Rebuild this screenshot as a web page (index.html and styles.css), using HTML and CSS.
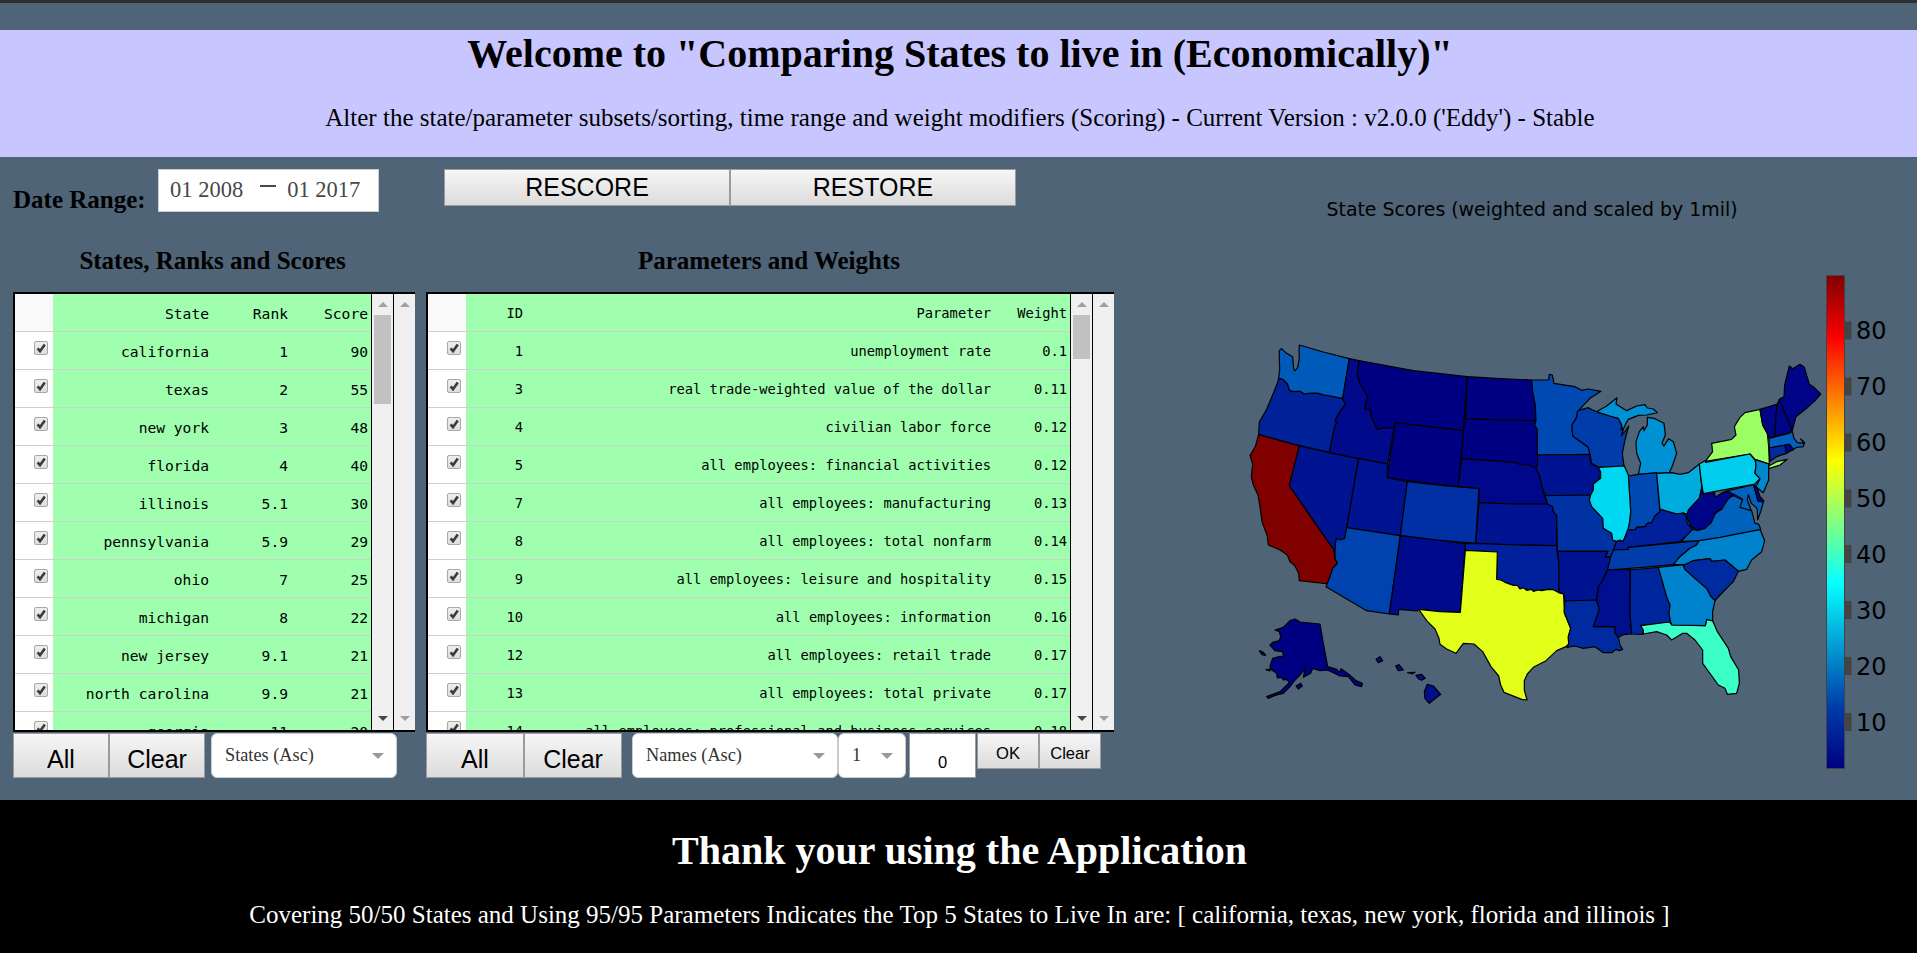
FILE: index.html
```html
<!DOCTYPE html>
<html lang="en">
<head>
<meta charset="utf-8">
<title>Comparing States</title>
<link rel="stylesheet" href="styles.css">
</head>
<body>
<svg class="defs" width="0" height="0"><defs>
<symbol id="check" viewBox="0 0 14 14"><path d="M2.600 6.400L5 9.200L9.800 2.400" fill="none" stroke="#3a3a3a" stroke-width="2.600"/></symbol>
</defs></svg>
<div class="topbar"></div>
<header class="banner">
<h1>Welcome to "Comparing States to live in (Economically)"</h1>
<p>Alter the state/parameter subsets/sorting, time range and weight modifiers (Scoring) - Current Version : v2.0.0 ('Eddy') - Stable</p>
</header>
<main class="main">
<section class="panel states">
<div class="tools"><span class="label">Date Range:</span><div class="dates"><span>01 2008</span><i class="dash"></i><span>01 2017</span></div></div>
<h3>States, Ranks and Scores</h3>
<div class="frame">
<div class="table">
<div class="row head"><span class="c"></span><span>State</span><span>Rank</span><span>Score</span></div>
<div class="row"><span class="c"><svg class="box"><use href="#check" width="14" height="14"/></svg></span><span>california</span><span>1</span><span>90</span></div>
<div class="row"><span class="c"><svg class="box"><use href="#check" width="14" height="14"/></svg></span><span>texas</span><span>2</span><span>55</span></div>
<div class="row"><span class="c"><svg class="box"><use href="#check" width="14" height="14"/></svg></span><span>new york</span><span>3</span><span>48</span></div>
<div class="row"><span class="c"><svg class="box"><use href="#check" width="14" height="14"/></svg></span><span>florida</span><span>4</span><span>40</span></div>
<div class="row"><span class="c"><svg class="box"><use href="#check" width="14" height="14"/></svg></span><span>illinois</span><span>5.1</span><span>30</span></div>
<div class="row"><span class="c"><svg class="box"><use href="#check" width="14" height="14"/></svg></span><span>pennsylvania</span><span>5.9</span><span>29</span></div>
<div class="row"><span class="c"><svg class="box"><use href="#check" width="14" height="14"/></svg></span><span>ohio</span><span>7</span><span>25</span></div>
<div class="row"><span class="c"><svg class="box"><use href="#check" width="14" height="14"/></svg></span><span>michigan</span><span>8</span><span>22</span></div>
<div class="row"><span class="c"><svg class="box"><use href="#check" width="14" height="14"/></svg></span><span>new jersey</span><span>9.1</span><span>21</span></div>
<div class="row"><span class="c"><svg class="box"><use href="#check" width="14" height="14"/></svg></span><span>north carolina</span><span>9.9</span><span>21</span></div>
<div class="row"><span class="c"><svg class="box"><use href="#check" width="14" height="14"/></svg></span><span>georgia</span><span>11</span><span>20</span></div>
</div>
<div class="scroll"><i class="up"></i><i class="thumb"></i><i class="down dark"></i></div>
<div class="scroll outer"><i class="up"></i><i class="down"></i></div>
</div>
<div class="actions"><button class="btn">All</button><button class="btn">Clear</button><div class="select sort">States (Asc)<i class="caret"></i></div></div>
</section>
<section class="panel params">
<div class="tools"><button class="btn wide">RESCORE</button><button class="btn wide">RESTORE</button></div>
<h3>Parameters and Weights</h3>
<div class="frame">
<div class="table">
<div class="row head"><span class="c"></span><span>ID</span><span>Parameter</span><span>Weight</span></div>
<div class="row"><span class="c"><svg class="box"><use href="#check" width="14" height="14"/></svg></span><span>1</span><span>unemployment rate</span><span>0.1</span></div>
<div class="row"><span class="c"><svg class="box"><use href="#check" width="14" height="14"/></svg></span><span>3</span><span>real trade-weighted value of the dollar</span><span>0.11</span></div>
<div class="row"><span class="c"><svg class="box"><use href="#check" width="14" height="14"/></svg></span><span>4</span><span>civilian labor force</span><span>0.12</span></div>
<div class="row"><span class="c"><svg class="box"><use href="#check" width="14" height="14"/></svg></span><span>5</span><span>all employees: financial activities</span><span>0.12</span></div>
<div class="row"><span class="c"><svg class="box"><use href="#check" width="14" height="14"/></svg></span><span>7</span><span>all employees: manufacturing</span><span>0.13</span></div>
<div class="row"><span class="c"><svg class="box"><use href="#check" width="14" height="14"/></svg></span><span>8</span><span>all employees: total nonfarm</span><span>0.14</span></div>
<div class="row"><span class="c"><svg class="box"><use href="#check" width="14" height="14"/></svg></span><span>9</span><span>all employees: leisure and hospitality</span><span>0.15</span></div>
<div class="row"><span class="c"><svg class="box"><use href="#check" width="14" height="14"/></svg></span><span>10</span><span>all employees: information</span><span>0.16</span></div>
<div class="row"><span class="c"><svg class="box"><use href="#check" width="14" height="14"/></svg></span><span>12</span><span>all employees: retail trade</span><span>0.17</span></div>
<div class="row"><span class="c"><svg class="box"><use href="#check" width="14" height="14"/></svg></span><span>13</span><span>all employees: total private</span><span>0.17</span></div>
<div class="row"><span class="c"><svg class="box"><use href="#check" width="14" height="14"/></svg></span><span>14</span><span>all employees: professional and business services</span><span>0.18</span></div>
</div>
<div class="scroll"><i class="up"></i><i class="thumb"></i><i class="down dark"></i></div>
<div class="scroll outer"><i class="up"></i><i class="down"></i></div>
</div>
<div class="actions"><button class="btn">All</button><button class="btn">Clear</button><div class="select names">Names (Asc)<i class="caret"></i></div><div class="select num">1<i class="caret"></i></div><div class="value">0</div><button class="btn small">OK</button><button class="btn small">Clear</button></div>
</section>
<svg class="map" viewBox="1200 157 717 643">
<defs><linearGradient id="jet" x1="0" y1="1" x2="0" y2="0">
<stop offset="0" stop-color="rgb(0,0,131)"/><stop offset=".125" stop-color="rgb(0,60,170)"/><stop offset=".375" stop-color="rgb(5,255,255)"/><stop offset=".625" stop-color="rgb(255,255,0)"/><stop offset=".875" stop-color="rgb(250,0,0)"/><stop offset="1" stop-color="rgb(128,0,0)"/>
</linearGradient></defs>
<text class="map-title" x="1326.5" y="216" textLength="411" lengthAdjust="spacingAndGlyphs">State Scores (weighted and scaled by 1mil)</text>
<g class="land" transform="translate(1240 330) scale(.33333)">
<path fill="rgb(0,90,185)" d="M178 45L250 66L328 86L308 206L270 198L250 195L235 190L210 190L192 192L180 184L160 185L148 182L142 162L128 148L116 145L119 118L118 88L118 62L124 56L140 70L158 80L160 105L162 120L166 122L173 112L178 85L177 60Z"/>
<path fill="rgb(0,33,152)" d="M116 145L128 148L142 162L148 182L160 185L180 184L192 192L210 190L235 190L250 195L270 198L308 206L316 222L300 245L286 270L290 280L284 290L268 368L160 342L56 314L58 276L80 238L100 190L112 160Z"/>
<path fill="rgb(128,0,0)" d="M56 314L178 348L148 467L215 565L282 660L285 685L292 700L278 715L268 745L267 762L178 752L176 730L165 708L150 695L142 675L120 660L85 645L82 618L66 575L60 530L54 495L40 465L34 440L38 402L30 377L46 350Z"/>
<path fill="rgb(0,20,146)" d="M178 348L268 368L356 386L320 593L314 625L300 630L290 625L286 640L285 662L282 660L148 467Z"/>
<path fill="rgb(0,10,138)" d="M328 86L357 92L352 135L362 165L384 200L378 218L374 238L390 236L396 265L412 298L434 292L455 294L463 290L443 402L356 386L268 368L284 290L290 280L286 270L300 245L316 222L308 206Z"/>
<path fill="rgb(0,0,131)" d="M357 92L520 122L682 140L670 302L466 278L463 290L455 294L434 292L412 298L396 265L390 236L374 238L378 218L384 200L362 165L352 135Z"/>
<path fill="rgb(0,0,131)" d="M466 278L670 302L655 470L550 458L441 443Z"/>
<path fill="rgb(0,20,146)" d="M356 386L443 402L441 443L502 455L481 617L320 593Z"/>
<path fill="rgb(0,48,163)" d="M502 455L610 467L717 475L707 640L590 630L481 617Z"/>
<path fill="rgb(0,67,174)" d="M320 593L481 617L448 852L380 842L258 770L268 745L278 715L292 700L285 685L285 662L286 640L290 625L300 630L314 625Z"/>
<path fill="rgb(0,10,138)" d="M481 617L590 630L676 641L661 847L600 845L536 838L532 843L476 838L475 855L448 852Z"/>
<path fill="rgb(0,0,131)" d="M682 140L780 146L875 150L878 185L886 225L888 272L780 270L676 266Z"/>
<path fill="rgb(0,0,131)" d="M676 266L780 270L888 272L884 285L892 298L893 400L888 415L868 405L840 403L826 397L665 386L670 302Z"/>
<path fill="rgb(0,8,137)" d="M665 386L826 397L840 403L868 405L888 415L898 435L905 465L912 495L923 522L820 522L717 518L717 475L655 470Z"/>
<path fill="rgb(0,20,146)" d="M717 518L820 522L923 522L938 530L940 545L950 557L950 647L830 645L707 640Z"/>
<path fill="rgb(0,33,155)" d="M676 641L707 640L830 645L950 647L957 700L957 788L930 778L905 780L875 783L860 778L838 776L820 766L795 757L770 748L772 666L676 661Z"/>
<path fill="rgb(225,255,25)" d="M676 661L772 666L770 748L782 750L795 757L820 766L832 766L840 777L850 773L860 781L875 778L880 784L895 780L905 782L925 778L940 779L957 788L971 792L973 848L992 895L985 920L986 942L978 950L950 962L918 992L880 1012L862 1032L853 1052L853 1080L861 1110L845 1108L792 1087L782 1065L776 1038L753 1010L728 965L702 942L670 940L648 970L620 957L600 943L597 925L585 897L560 872L536 838L600 845L661 847Z"/>
<path fill="rgb(0,72,178)" d="M875 150L926 150L928 133L937 135L942 160L980 166L1005 170L1025 181L1045 177L1083 184L1050 205L1016 241L1010 262L996 285L998 318L1015 330L1045 352L1050 373L892 375L892 298L884 285L888 272L886 225L878 185Z"/>
<path fill="rgb(0,60,170)" d="M1016 241L1045 233L1058 240L1075 247L1110 258L1135 265L1145 285L1143 300L1150 298L1144 318L1158 300L1166 288L1155 330L1147 370L1152 408L1075 412L1055 400L1050 373L1045 352L1015 330L998 318L996 285L1010 262L1012 245Z"/>
<path fill="rgb(0,145,212)" d="M1072 244L1100 228L1131 203L1128 222L1160 242L1190 228L1215 224L1222 234L1240 237L1252 248L1220 255L1195 256L1165 268L1158 280L1148 302L1145 285L1135 265L1110 258L1075 247ZM1222 262L1245 266L1272 280L1276 315L1266 340L1272 348L1286 326L1300 335L1310 370L1298 405L1288 428L1252 430L1195 433L1202 400L1190 370L1188 335L1198 305L1210 290L1212 302L1222 285Z"/>
<path fill="rgb(0,20,145)" d="M892 375L1050 373L1050 390L1055 403L1075 412L1082 432L1075 450L1060 462L1060 480L1050 497L915 497L905 465L898 435L888 415L893 400Z"/>
<path fill="rgb(0,50,163)" d="M915 497L1050 495L1048 510L1055 530L1088 565L1090 595L1115 610L1118 630L1130 634L1122 660L1112 680L1095 682L1104 664L952 664L950 557L940 545L938 530L923 522Z"/>
<path fill="rgb(0,72,178)" d="M1165 438L1195 433L1250 428L1260 545L1245 558L1235 578L1222 580L1215 590L1190 592L1185 600L1163 600L1168 580L1172 545Z"/>
<path fill="rgb(0,215,240)" d="M1075 412L1153 408L1165 435L1172 545L1168 580L1162 605L1150 634L1140 630L1130 634L1118 630L1115 610L1090 595L1088 565L1055 530L1048 510L1052 495L1060 480L1060 462L1082 445L1082 425Z"/>
<path fill="rgb(0,172,222)" d="M1250 430L1295 428L1320 433L1345 428L1378 402L1382 440L1386 470L1378 505L1355 530L1345 553L1330 549L1310 552L1280 545L1260 538Z"/>
<path fill="rgb(0,33,155)" d="M1163 600L1185 600L1190 592L1215 590L1222 580L1235 578L1245 558L1260 545L1262 538L1285 545L1310 552L1330 549L1338 558L1342 580L1358 598L1320 635L1165 652L1165 658L1120 660L1130 634L1150 634Z"/>
<path fill="rgb(0,60,170)" d="M1120 660L1165 658L1165 652L1377 632L1370 645L1350 655L1320 680L1300 704L1200 713L1102 720L1112 680Z"/>
<path fill="rgb(0,20,145)" d="M952 664L1104 664L1095 682L1112 680L1102 720L1090 748L1075 770L1070 810L975 814L971 792L957 788L957 700Z"/>
<path fill="rgb(0,43,160)" d="M975 813L1070 810L1078 838L1060 890L1125 890L1125 908L1136 925L1140 945L1148 958L1138 962L1128 958L1115 968L1090 968L1065 950L1030 955L1005 948L980 952L986 942L985 920L992 895L973 848Z"/>
<path fill="rgb(0,15,142)" d="M1102 720L1171 718L1170 850L1175 912L1150 914L1136 922L1125 908L1125 890L1060 890L1078 838L1070 810L1075 770L1090 748Z"/>
<path fill="rgb(0,38,157)" d="M1171 720L1255 712L1280 800L1290 825L1287 850L1292 877L1202 887L1210 900L1208 913L1175 912L1170 850Z"/>
<path fill="rgb(60,255,200)" d="M1202 887L1288 876L1296 885L1396 887L1400 868L1418 872L1432 905L1465 955L1472 980L1496 1020L1498 1060L1490 1090L1462 1093L1455 1075L1435 1065L1388 1000L1388 960L1365 930L1340 910L1328 910L1295 930L1280 915L1250 905L1210 912L1210 900Z"/>
<path fill="rgb(0,130,205)" d="M1255 712L1330 704L1335 718L1365 745L1400 775L1412 798L1425 812L1418 845L1418 873L1400 868L1396 887L1296 885L1292 877L1287 850L1290 825L1280 800Z"/>
<path fill="rgb(0,130,205)" d="M1377 632L1560 598L1574 632L1565 665L1535 690L1520 718L1495 724L1455 690L1415 694L1410 686L1360 692L1340 704L1300 704L1320 680L1350 655L1370 645Z"/>
<path fill="rgb(0,43,160)" d="M1330 706L1360 692L1410 686L1415 694L1455 690L1495 724L1480 755L1440 795L1425 812L1412 798L1400 775L1365 745L1335 718Z"/>
<path fill="rgb(0,98,188)" d="M1323 635L1358 598L1380 600L1412 580L1420 555L1440 540L1462 503L1482 497L1508 510L1504 528L1535 542L1545 580L1556 582L1562 598L1440 622L1377 632Z"/>
<path fill="rgb(0,98,188)" d="M1455 484L1543 463L1550 495L1556 512L1570 517L1562 545L1553 570L1552 540L1548 532L1534 520L1525 495L1522 510L1534 542L1500 532L1508 508L1480 492L1462 500Z"/>
<path fill="rgb(0,5,135)" d="M1540 463L1552 475L1560 500L1572 513L1554 514Z"/>
<path fill="rgb(0,5,135)" d="M1384 455L1390 491L1423 487L1427 502L1450 486L1468 485L1480 494L1462 510L1445 538L1428 545L1415 575L1395 595L1370 601L1352 588L1340 560L1345 540L1378 505L1386 470Z"/>
<path fill="rgb(155,255,100)" d="M1396 394L1418 365L1415 340L1475 328L1488 315L1483 290L1500 262L1515 248L1560 238L1568 285L1582 310L1586 350L1588 402L1545 388L1530 372ZM1586 408L1610 395L1642 388L1620 405L1586 416Z"/>
<path fill="rgb(0,205,238)" d="M1378 402L1395 392L1397 397L1530 372L1545 390L1548 405L1545 430L1560 446L1545 462L1390 491L1384 455Z"/>
<path fill="rgb(0,135,205)" d="M1546 389L1586 402L1586 450L1570 488L1548 470L1560 446L1545 430L1548 405Z"/>
<path fill="rgb(0,5,135)" d="M1560 238L1612 222L1608 260L1605 318L1587 325L1582 310L1568 285Z"/>
<path fill="rgb(0,5,135)" d="M1612 222L1618 208L1650 285L1657 300L1648 308L1605 318L1608 260Z"/>
<path fill="rgb(0,5,135)" d="M1618 208L1632 200L1634 165L1648 108L1658 116L1680 103L1693 112L1708 163L1720 170L1742 192L1725 212L1700 235L1668 260L1660 290L1657 302Z"/>
<path fill="rgb(0,98,190)" d="M1587 325L1648 310L1657 305L1662 325L1672 338L1692 340L1682 327L1694 338L1690 350L1670 352L1655 362L1640 345L1588 354Z"/>
<path fill="rgb(0,43,160)" d="M1588 354L1635 345L1640 370L1610 380L1590 394Z"/>
<path fill="rgb(0,5,135)" d="M1635 345L1648 342L1660 358L1640 370Z"/>
<path fill="rgb(0,0,131)" d="M240 882L250 940L263 1010L290 1018L300 1028L303 1016L328 1034L348 1052L367 1060L365 1070L345 1065L325 1040L300 1038L280 1028L262 1020L240 1022L218 1015L212 1030L190 1042L195 1015L180 1035L165 1050L150 1070L130 1090L105 1096L85 1105L80 1100L120 1085L148 1058L140 1048L130 1050L125 1042L112 1044L110 1030L92 1018L90 1008L98 985L118 980L130 978L128 965L105 962L90 945L98 937L118 932L122 920L118 905L105 900L130 892L150 872L165 867L180 876ZM58 962L70 967L77 976L66 974ZM168 1068L182 1060L187 1068L175 1077ZM78 1019L88 1018L90 1023Z"/>
<path fill="rgb(0,15,142)" d="M408 988L420 980L428 992L415 998ZM467 1008L477 1004L490 1020L475 1022ZM503 1028L525 1027L518 1032ZM528 1036L545 1033L556 1045L545 1051L535 1046ZM562 1063L580 1068L602 1093L568 1120L555 1105L553 1085Z"/>
</g>
<rect class="bar" x="1826.5" y="275.5" width="18" height="493" fill="url(#jet)"/>
<g class="ticks"><path d="M1845 330.5h6.500M1845 386.500h6.500M1845 442.500h6.500M1845 498.500h6.500M1845 554h6.500M1845 610h6.500M1845 666h6.500M1845 722h6.500"/>
<text x="1856" y="339">80</text><text x="1856" y="395">70</text><text x="1856" y="451">60</text><text x="1856" y="507">50</text><text x="1856" y="563">40</text><text x="1856" y="619">30</text><text x="1856" y="675">20</text><text x="1856" y="731">10</text></g>
</svg>
</main>
<footer class="footer">
<h1>Thank your using the Application</h1>
<p>Covering 50/50 States and Using 95/95 Parameters Indicates the Top 5 States to Live In are: [ california, texas, new york, florida and illinois ]</p>
</footer>
</body>
</html>
```
FILE: styles.css
```css
* { box-sizing: border-box; }
body { margin: 0; height: 953px; overflow: hidden; background: #4f6477; font-family: "Liberation Serif", serif; color: #000; display: flex; flex-direction: column; }
.defs { position: absolute; }
i { display: block; }
.topbar { height: 3px; background: #2e2e2e; margin-bottom: 27px; }
.banner { height: 127px; background: #c8c6ff; text-align: center; padding: 1px 0 0 3px; }
h1 { margin: 0; font-size: 40px; line-height: 46px; font-weight: bold; white-space: nowrap; }
.banner p, .footer p { margin: 0; font-size: 25px; line-height: 29px; white-space: nowrap; }
.banner p { margin-top: 26px; }
.main { height: 643px; display: flex; align-items: flex-start; }
.panel { display: flex; flex-direction: column; padding-top: 12px; }
.states { width: 402px; margin-left: 13px; }
.params { width: 688px; margin-left: 11px; }
.tools { height: 43px; display: flex; align-items: flex-start; }
.params .tools { padding-left: 18px; }
.label { width: 145px; font-size: 25px; font-weight: bold; line-height: 28px; padding-top: 17px; }
.dates { width: 221px; height: 43px; background: #fff; border: 1px solid #cacccd; display: flex; align-items: center; padding: 0 11px 2px; font-size: 22.5px; color: #484848; white-space: nowrap; }
.dash { width: 16px; height: 2px; background: #484848; margin: -8px 11px 0 17px; }
h3 { margin: 34px 0 0; height: 46px; font-size: 25px; line-height: 30px; text-align: center; }
.states h3 { padding-right: 3px; }
.params h3 { padding-right: 2px; }
.frame { height: 440px; display: flex; border-top: 2px solid #000; border-bottom: 2px solid #000; border-left: 2px solid #000; }
.table { flex: 1; overflow: hidden; border-right: 1px solid #000; font-family: "DejaVu Sans Mono", monospace; font-size: 14.62px; background: #9fffae; }
.params .table { font-size: 13.75px; }
.row { height: 38px; display: grid; border-bottom: 1px solid #c9d3c9; line-height: 39px; text-align: right; white-space: nowrap; }
.states .row { grid-template-columns: 38px 156px 79px 80px; }
.params .row { grid-template-columns: 38px 57px 468px 76px; }
.c { background: #fff; display: flex; justify-content: flex-end; padding: 9px 5px 0 0; height: 37px; }
.head .c { background: #fafafa; }
.box { width: 14px; height: 14px; border: 1px solid #a8a8a8; border-radius: 2px; background: linear-gradient(#eee, #dcdcdc); }
.scroll { width: 21px; background: #f0f0f0; display: flex; flex-direction: column; align-items: center; }
.outer { border-left: 1px solid #000; width: 22px; }
.up { border: 5px solid transparent; border-top: 0; border-bottom-color: #a0a0a0; margin-top: 8px; height: 5px; }
.down { border: 5px solid transparent; border-bottom: 0; border-top-color: #a0a0a0; margin: auto 0 9px; height: 5px; }
.down.dark { border-top-color: #484848; }
.thumb { width: 17px; height: 89px; background: #c1c1c1; margin-top: 8px; }
.params .thumb { height: 44px; }
.actions { display: flex; align-items: flex-start; height: 45px; padding-top: 1px; }
.btn { width: 96px; height: 45px; border: 1px solid #9b9b9b; background: linear-gradient(#f6f6f6, #dcdcdc); font: 25px "Liberation Sans", sans-serif; padding: 8px 0 0; color: #000; flex: none; }
.params .btn { width: 98px; }
.params .btn.wide { width: 286px; height: 37px; padding: 0; }
.params .btn.small { width: 62px; height: 36px; font-size: 16.6px; padding: 5px 0 0; }
.select { height: 45px; flex: none; background: #fff; border: 1px solid #ccc; border-radius: 6px; font-size: 18.3px; color: #333; line-height: 43px; padding: 0 12px 0 13px; display: flex; align-items: center; justify-content: space-between; }
.sort { width: 186px; margin-left: 6px; }
.names { width: 206px; margin-left: 10px; }
.num { width: 68px; }
.caret { border: 6px solid transparent; border-top-color: #999; border-bottom: 0; }
.value { width: 67px; height: 45px; margin-left: 3px; margin-right: 1px; background: #fff; border: 1px solid #9b9b9b; text-align: center; font: 16.6px "Liberation Sans", sans-serif; padding-top: 19px; flex: none; }
.map { width: 717px; height: 643px; margin-left: 86px; flex: none; }
.map-title { font: 20px "DejaVu Sans", sans-serif; }
.land { stroke: #000; stroke-width: 3.6; stroke-linejoin: round; }
.bar { stroke: #444; }
.ticks path { stroke: #444; stroke-width: 18; }
.ticks text { font: 24px "DejaVu Sans", sans-serif; }
.footer { height: 153px; background: #000; color: #fff; text-align: center; padding: 28px 0 0 2px; }
.footer p { margin-top: 26px; }
```
